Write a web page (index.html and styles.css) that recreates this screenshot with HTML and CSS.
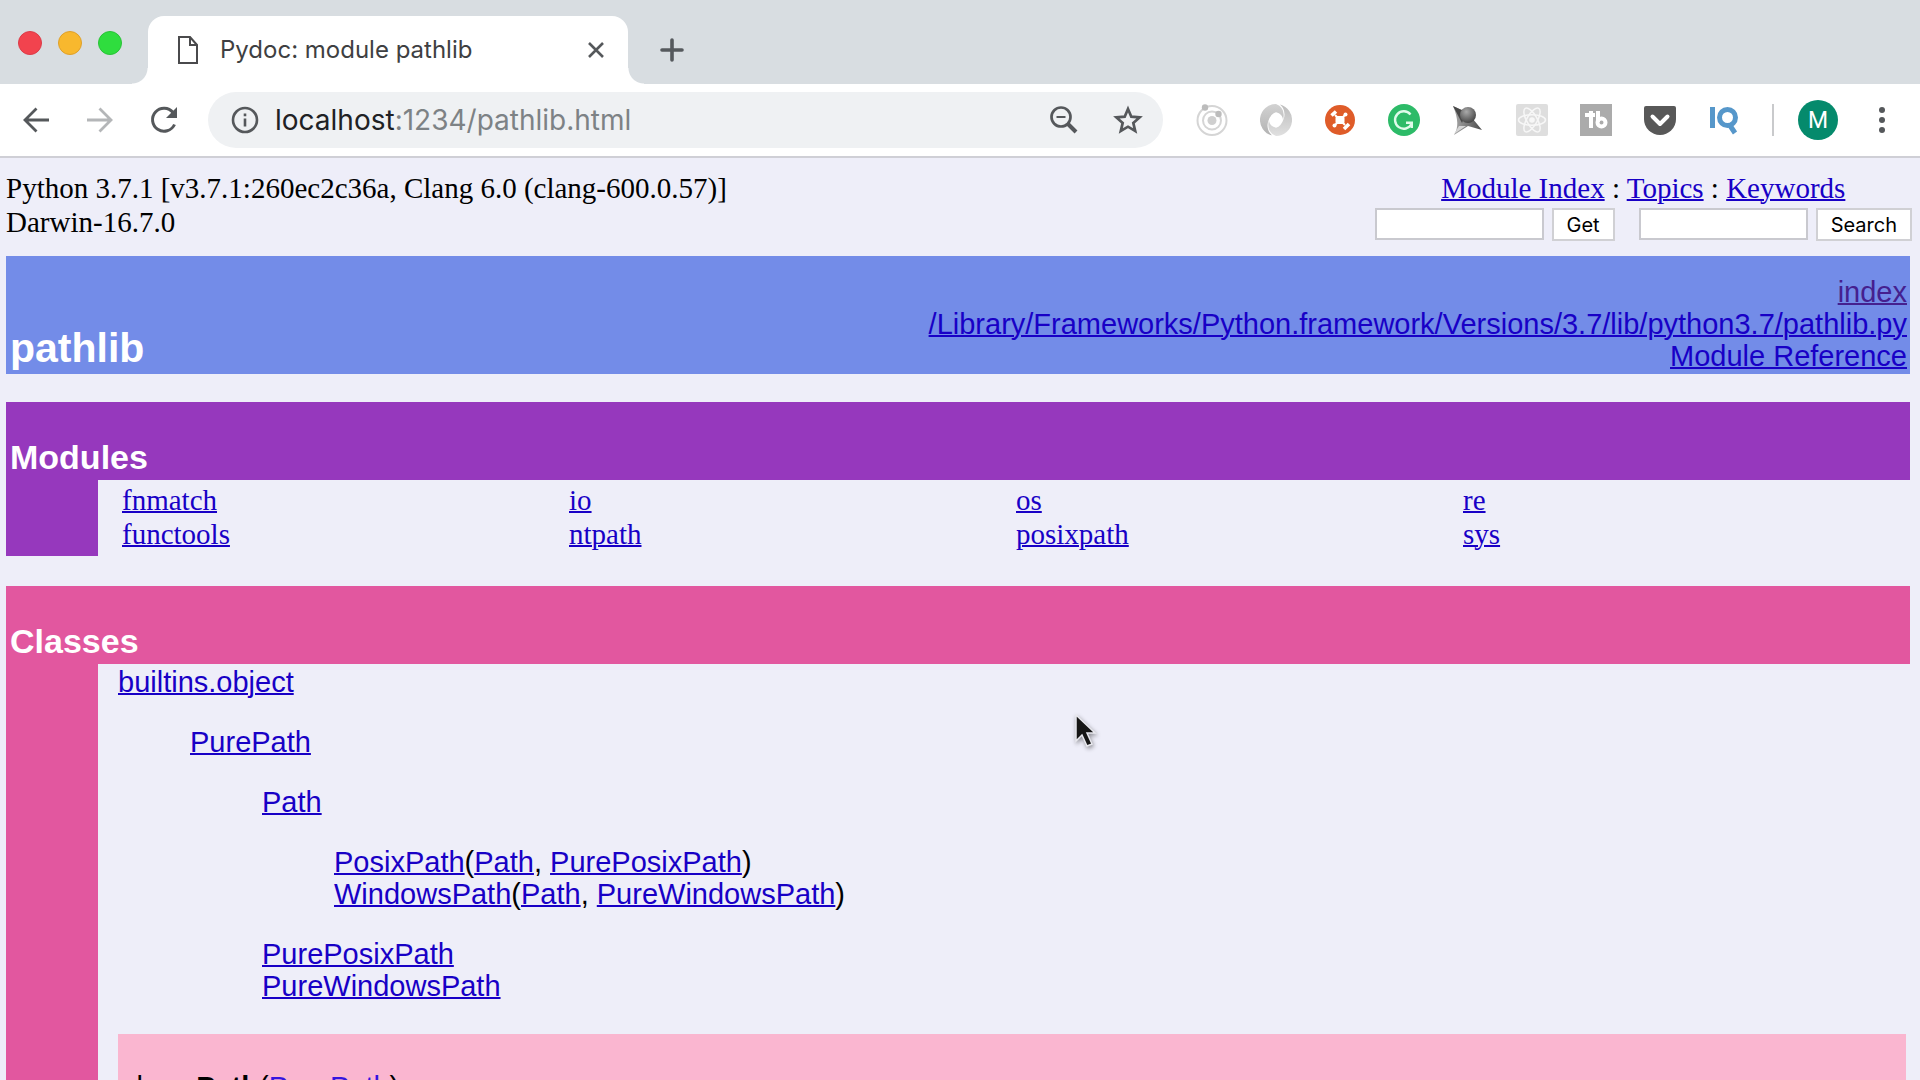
FILE: index.html
```html
<!DOCTYPE html>
<html lang="en">
<head>
<meta charset="utf-8">
<title>Pydoc: module pathlib</title>
<link rel="stylesheet" href="styles.css">
</head>
<body>
<header class="browser">
  <div class="tabstrip">
    <div class="lights"><span class="light light-red"></span><span class="light light-yellow"></span><span class="light light-green"></span></div>
    <div class="tab">
      <svg class="tab-icon" viewBox="0 0 20 28" fill="none" stroke="#4a4a4c" stroke-width="2"><path d="M1 1H12L19 9V27H1Z"/><path d="M12 1V9H19" /></svg>
      <span class="tab-title">Pydoc: module pathlib</span>
      <button class="tab-close" type="button" aria-label="Close tab"><svg viewBox="0 0 16 16" width="16" height="16" stroke="#55585b" stroke-width="2.6"><path d="M1 1L15 15M15 1L1 15"/></svg></button>
    </div>
    <button class="tab-new" type="button" aria-label="New tab"><svg viewBox="0 0 24 24" width="24" height="24" stroke="#55595d" stroke-width="3.6" stroke-linecap="round"><path d="M12 2V22M2 12H22"/></svg></button>
  </div>
  <div class="toolbar">
    <div class="nav">
      <button type="button" aria-label="Back"><svg viewBox="0 0 32 32" fill="none" stroke="#55585b" stroke-width="2.8"><path d="M29 16H5M16.500 4.500L5 16L16.500 27.500"/></svg></button>
      <button type="button" aria-label="Forward"><svg viewBox="0 0 32 32" fill="none" stroke="#b4b6b8" stroke-width="2.800"><path d="M3 16H27M15.500 4.500L27 16L15.500 27.500"/></svg></button>
      <button type="button" aria-label="Reload"><svg viewBox="0 0 32 32" fill="none" stroke="#55585b" stroke-width="3"><path d="M25 8.500A11.500 11.500 0 1 0 26.500 20.500"/><path d="M29 3V14H18Z" fill="#55585b" stroke="none"/></svg></button>
    </div>
    <div class="omnibox">
      <svg class="info" viewBox="0 0 28 28" fill="none" stroke="#55585b" stroke-width="2.600"><circle cx="14" cy="14" r="12"/><path d="M14 12.500V20.500M14 7.500V10.300"/></svg>
      <span class="url">localhost<span class="url-rest">:1234/pathlib.html</span></span>
      <button type="button" aria-label="Zoom"><svg viewBox="0 0 32 32" fill="none" stroke="#55585b"><circle cx="13" cy="13" r="9.500" stroke-width="2.700"/><path d="M8.500 13H17.500" stroke-width="2"/><path d="M19.500 19.500L28 28" stroke-width="4"/></svg></button>
      <button type="button" aria-label="Bookmark"><svg viewBox="0 0 32 32" fill="none" stroke="#55585b" stroke-width="2.700"><path d="M16 5L19.300 12.700L27.600 13.400L21.300 18.900L23.200 27L16 22.700L8.800 27L10.700 18.900L4.400 13.400L12.700 12.700Z"/></svg></button>
    </div>
    <div class="extensions">
      <svg viewBox="0 0 32 32" fill="none" stroke="#d5d5d5" stroke-width="2"><circle cx="16" cy="16.500" r="14.500"/><circle cx="16" cy="16.500" r="9"/><circle cx="16" cy="16.500" r="4.500" fill="#cfcfcf" stroke="none"/><circle cx="9" cy="3.500" r="3.200" fill="#bcbcbc" stroke="none"/><circle cx="22.500" cy="10" r="3.200" fill="#bcbcbc" stroke="none"/></svg>
      <svg viewBox="0 0 32 32"><defs><linearGradient id="ringA" x1="0" y1="0" x2="0" y2="1"><stop offset="0" stop-color="#d2d2d2"/><stop offset="1" stop-color="#b2b2b2"/></linearGradient><linearGradient id="ringB" x1="0" y1="0" x2="0" y2="1"><stop offset="0" stop-color="#bcbcbc"/><stop offset="1" stop-color="#e0e0e0"/></linearGradient></defs><path d="M16 0A16 16 0 0 0 12 31.500Q6 26 8 18Q11 9 16 8.500C20 9 23 12 23 16Q26 4 16 0Z" fill="url(#ringA)"/><path d="M16 32A16 16 0 0 0 20 .5Q26 6 24 14Q21 23 16 23.500C12 23 9 20 9 16Q6 28 16 32Z" fill="url(#ringB)"/><ellipse cx="16" cy="16" rx="4.500" ry="7.500" fill="#fff"/></svg>
      <svg viewBox="0 0 32 32"><circle cx="16" cy="16" r="15" fill="#df5c29"/><g fill="none" stroke="#fff"><path d="M11 11L21 21M21 11L11 21" stroke-width="2"/><path d="M7.500 11.500L12 7.500M20 25L25 20" stroke-width="3.600"/></g><g fill="#fff"><circle cx="21.500" cy="10.500" r="2"/><circle cx="10.500" cy="21.500" r="2"/><rect x="11.500" y="12" width="9" height="8" rx="2"/></g></svg>
      <svg viewBox="0 0 32 32"><circle cx="16" cy="16" r="16" fill="#2dbb68"/><path d="M22.500 10.500A8.700 8.700 0 1 0 23.500 20" fill="none" stroke="#dffbea" stroke-width="2.400"/><path d="M18 17.500H25V24H22.500V20H18Z" fill="#dffbea"/></svg>
      <svg viewBox="0 0 32 32"><defs><radialGradient id="orb" cx=".4" cy=".3" r=".7"><stop offset="0" stop-color="#aaa"/><stop offset="1" stop-color="#484848"/></radialGradient><linearGradient id="spike" x1="0" x2="1"><stop offset="0" stop-color="#aaa"/><stop offset="1" stop-color="#4b4b4b"/></linearGradient></defs><path d="M1 2L16 9L30 26L16 22L2 31Q9 21 1 2Z" fill="url(#spike)"/><path d="M1 2L14 8L10 19Z" fill="#484848"/><path d="M7 22L14 22L2 30Z" fill="#d5d5d5"/><circle cx="16" cy="11" r="8" fill="url(#orb)"/></svg>
      <svg viewBox="0 0 32 32"><rect width="32" height="32" rx="2" fill="#dedede"/><g fill="none" stroke="#f7f7f7" stroke-width="1.500"><ellipse cx="16" cy="16" rx="13.500" ry="5.200"/><ellipse cx="16" cy="16" rx="13.500" ry="5.200" transform="rotate(60 16 16)"/><ellipse cx="16" cy="16" rx="13.500" ry="5.200" transform="rotate(120 16 16)"/></g><circle cx="16" cy="16" r="2.800" fill="#f7f7f7"/></svg>
      <svg viewBox="0 0 32 32"><rect width="32" height="32" fill="#ababab"/><g fill="none" stroke="#fff" stroke-width="4"><path d="M5 11H15M11 7V24M18 7V18"/><circle cx="21.500" cy="18.500" r="4"/></g></svg>
      <svg viewBox="0 0 32 32"><path d="M2 2H30Q32 2 32 4V15A16 16 0 0 1 0 15V4Q0 2 2 2Z" fill="#585858"/><path d="M8.500 12.500L16 20L23.500 12.500" fill="none" stroke="#fff" stroke-width="4" stroke-linecap="round" stroke-linejoin="round"/></svg>
      <svg viewBox="0 0 32 32" fill="none" stroke="#5697ca"><path d="M4.500 3V24" stroke-width="5"/><circle cx="19.500" cy="13.500" r="8" stroke-width="5"/><path d="M21 20L27 29" stroke-width="5"/></svg>
    </div>
    <span class="divider"></span>
    <button class="avatar" type="button">M</button>
    <button class="menu" type="button" aria-label="Menu"><svg viewBox="0 0 32 32" fill="#55585b"><circle cx="16" cy="6" r="3"/><circle cx="16" cy="16" r="3"/><circle cx="16" cy="26" r="3"/></svg></button>
  </div>
</header>
<main class="page">
  <div class="intro">
    <div>Python 3.7.1 [v3.7.1:260ec2c36a, Clang 6.0 (clang-600.0.57)]<br>Darwin-16.7.0</div>
    <div class="tools">
      <div><a href="#">Module Index</a> : <a href="#">Topics</a> : <a href="#">Keywords</a></div>
      <div class="forms">
        <form class="form"><input type="text" aria-label="Get"><button type="submit">Get</button></form>
        <form class="form"><input type="text" aria-label="Search"><button type="submit">Search</button></form>
      </div>
    </div>
  </div>
  <div class="doc">
    <div class="title-bar">
      <h1>pathlib</h1>
      <div class="title-links"><a class="visited" href="#">index</a><br><a href="#">/Library/Frameworks/Python.framework/Versions/3.7/lib/python3.7/pathlib.py</a><br><a href="#">Module Reference</a></div>
    </div>
    <section class="section modules">
      <h2>Modules</h2>
      <div class="section-body module-list">
        <div><a href="#">fnmatch</a><br><a href="#">functools</a></div>
        <div><a href="#">io</a><br><a href="#">ntpath</a></div>
        <div><a href="#">os</a><br><a href="#">posixpath</a></div>
        <div><a href="#">re</a><br><a href="#">sys</a></div>
      </div>
    </section>
    <section class="section classes">
      <h2>Classes</h2>
      <div class="section-body class-body">
        <dl class="tree">
          <dt><a href="#">builtins.object</a></dt>
          <dd><dl>
            <dt><a href="#">PurePath</a></dt>
            <dd><dl>
              <dt><a href="#">Path</a></dt>
              <dd><dl>
                <dt><a href="#">PosixPath</a>(<a href="#">Path</a>, <a href="#">PurePosixPath</a>)</dt>
                <dt><a href="#">WindowsPath</a>(<a href="#">Path</a>, <a href="#">PureWindowsPath</a>)</dt>
              </dl></dd>
              <dt><a href="#">PurePosixPath</a></dt>
              <dt><a href="#">PureWindowsPath</a></dt>
            </dl></dd>
          </dl></dd>
        </dl>
        <div class="class-card">class <b>Path</b>(<a href="#">PurePath</a>)</div>
      </div>
    </section>
  </div>
  <svg class="cursor" viewBox="0 0 22 34"><path d="M1 1V27L7 21L12 32L17 30L12 19H20Z" fill="#161616" stroke="#e8e8ee" stroke-width="1.500"/></svg>
</main>
</body>
</html>
```
FILE: styles.css
```css
* { box-sizing: border-box; }

body {
  margin: 0;
  height: 100vh;
  overflow: hidden;
  display: flex;
  flex-direction: column;
  background: #eeeef9;
  color: #000;
  font: 29px/34px "Liberation Serif", "Times New Roman", serif;
}

button { padding: 0; border: 0; background: none; font: inherit; }
svg { display: block; }

/* Browser chrome */
.browser {
  flex: none;
  border-bottom: 2px solid #cfcfd6;
  background: #fff;
  font-family: Inter, Roboto, sans-serif;
}

.tabstrip {
  display: flex;
  height: 84px;
  background: #d8dde1;
}

.lights { display: flex; gap: 16px; width: 148px; padding: 31px 0 0 18px; }
.light { width: 24px; height: 24px; border-radius: 50%; border: 1px solid; }
.light-red { background: #f2434e; border-color: #dc3b48; }
.light-yellow { background: #f8b82e; border-color: #dfa02a; }
.light-green { background: #2fdd3e; border-color: #29c237; }

.tab {
  position: relative;
  display: flex;
  align-items: center;
  width: 480px;
  margin-top: 16px;
  padding: 0 24px 0 30px;
  border-radius: 16px 16px 0 0;
  background: #fff;
}
.tab::before, .tab::after {
  content: "";
  position: absolute;
  bottom: 0;
  width: 16px;
  height: 16px;
}
.tab::before { right: 100%; background: radial-gradient(circle at 0 0, transparent 15px, #fff 16px); }
.tab::after { left: 100%; background: radial-gradient(circle at 100% 0, transparent 15px, #fff 16px); }
.tab-icon { width: 20px; height: 28px; margin-right: 22px; }
.tab-title { flex: 1; color: #3e3f42; font-size: 24px; white-space: nowrap; }
.tab-new { margin: 16px 0 0 32px; }

.toolbar { display: flex; align-items: center; height: 72px; padding: 0 22px 0 20px; }
.toolbar svg { width: 32px; height: 32px; }
.nav { display: flex; gap: 32px; width: 188px; }

.omnibox {
  flex: 1;
  display: flex;
  align-items: center;
  gap: 32px;
  height: 56px;
  padding: 0 19px 0 23px;
  border-radius: 28px;
  background: #eff1f3;
  color: #202124;
}
.omnibox .info { width: 28px; height: 28px; margin-right: -16px; }
.url { flex: 1; font-size: 28px; }
.url-rest { color: #7d8285; }

.extensions { display: flex; gap: 32px; margin-left: 33px; }
.divider { width: 2px; height: 32px; margin: 0 24px 0 32px; background: #c9cacc; }
.avatar {
  width: 40px;
  height: 40px;
  border-radius: 50%;
  background: #058a6c;
  color: #fff;
  font: 23px Roboto, sans-serif;
}
.menu { margin-left: 28px; }

/* Pydoc page */
.page { flex: 1; min-height: 0; position: relative; overflow: hidden; }
a { color: #1800c6; text-decoration-thickness: 2px; }
a.visited { color: #45208f; }

.intro {
  display: flex;
  justify-content: space-between;
  height: 98px;
  padding: 13px 8px 0 6px;
}
.tools { text-align: center; }
.forms { display: flex; gap: 24px; margin-top: 3px; }
.form { display: flex; gap: 8px; }
.form input {
  width: 169px;
  height: 32px;
  border: 2px solid #c9c9cf;
  background: #fff;
}
.form button {
  height: 33px;
  padding: 0 13px;
  border: 2px solid #d0d0d4;
  background: #fff;
  color: #000;
  font: 20px/28px Inter, Roboto, sans-serif;
}

.doc { padding: 0 10px 0 6px; }
.title-bar, h2, .class-body { font-family: "Liberation Sans", Arial, sans-serif; }
.title-bar {
  display: flex;
  justify-content: space-between;
  align-items: flex-end;
  padding: 20px 3px 2px 4px;
  background: #738ce8;
}
h1, h2 { margin: 0; color: #fff; }
h1 { font-size: 41px; line-height: 47px; }
.title-links { line-height: 32px; text-align: right; }

.section { margin-top: 28px; border-left: 92px solid; }
.section h2 {
  margin-left: -92px;
  padding: 36px 4px 4px;
  font-size: 34px;
  line-height: 38px;
}
.modules { border-color: #9638bd; }
.modules h2 { background: #9638bd; }
.classes { margin-top: 30px; border-color: #e2579f; }
.classes h2 { background: #e2579f; }

.module-list {
  display: grid;
  grid-template-columns: repeat(4, 1fr);
  padding: 3px 0 5px 24px;
}
.class-body { padding: 2px 4px 0 20px; line-height: 32px; }
dl { margin: 0; }
dd { margin: 28px 0 28px 72px; }
dd:last-child { margin-bottom: 0; }
.class-card { margin-top: 32px; padding: 37px 4px; background: #fab6d0; }
.class-card a { color: #3414e0; }

.cursor { position: absolute; left: 1075px; top: 556px; width: 22px; height: 34px; filter: drop-shadow(1px 2px 2px #0006); }
```
